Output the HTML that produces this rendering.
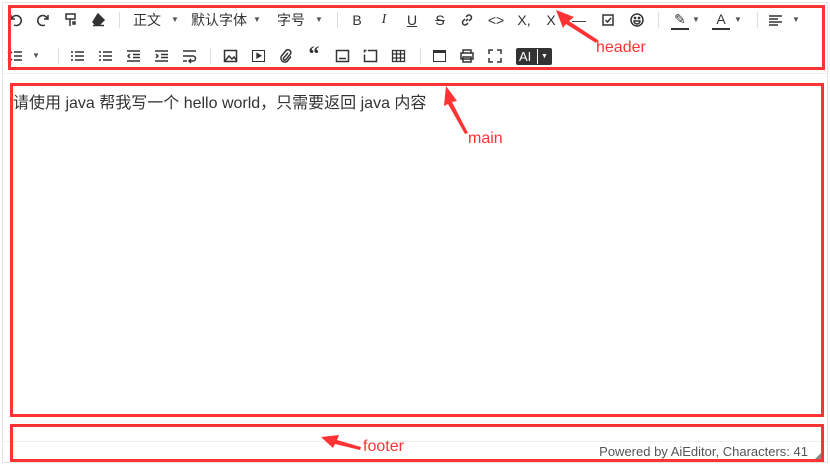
<!DOCTYPE html>
<html><head><meta charset="utf-8"><style>
*{margin:0;padding:0;box-sizing:border-box}
body{width:830px;height:465px;background:#fff;position:relative;overflow:hidden;font-family:"Liberation Sans","Noto Sans CJK SC",sans-serif;color:#333}
.a{position:absolute}
.ic{position:absolute;font-size:14px;color:#333;transform:translateX(-50%);line-height:16px;white-space:nowrap}
.dd{position:absolute;font-size:8px;color:#555;transform:translateX(-50%)}
.sep{position:absolute;width:1px;height:16px;background:#ddd}
.red{position:absolute;border:3px solid #f33}
.lbl{position:absolute;color:#f33;font-size:16px}
svg.s{position:absolute;overflow:visible}
svg.s *{fill:none;stroke:#333;stroke-width:1.5}
</style></head><body>
<div class="a" style="left:2px;top:2px;width:826px;height:461px;border:1px solid #e5e5e5"></div>
<div class="a" style="left:3px;top:73px;width:824px;height:1px;background:#eee"></div>
<div class="a" style="left:3px;top:441px;width:824px;height:1px;background:#eee"></div>

<!-- row1 -->
<svg class="s" style="left:10px;top:14px" width="12" height="12"><path d="M1 1v4h4M1.5 5A5 5 0 1 1 4 11"/></svg>
<svg class="s" style="left:37px;top:14px" width="12" height="12"><path d="M11 1v4h-4M10.5 5A5 5 0 1 0 8 11"/></svg>
<svg class="s" style="left:65px;top:13px" width="12" height="14"><path d="M1 1h9v5h-9zM5 6v7M8 9h2v2h-2z"/></svg>
<svg class="s" style="left:92px;top:13px" width="13" height="13"><path d="M6 1l6 6-5 5h-3l-3-3z" style="fill:#333"/><path d="M1 12.5h11"/></svg>
<div class="sep" style="left:119px;top:12px"></div>
<span class="ic" style="left:147px;top:12px">正文</span><span class="dd" style="left:175px;top:15px">▼</span>
<span class="ic" style="left:219px;top:12px">默认字体</span><span class="dd" style="left:257px;top:15px">▼</span>
<span class="ic" style="left:291px;top:12px">字号</span><span class="dd" style="left:319px;top:15px">▼</span>
<div class="sep" style="left:337px;top:12px"></div>
<span class="ic" style="left:357px;top:12px">B</span>
<span class="ic" style="left:384px;top:12px;font-style:italic;font-family:'Liberation Serif'">I</span>
<span class="ic" style="left:412px;top:12px;text-decoration:underline">U</span>
<span class="ic" style="left:440px;top:12px;text-decoration:line-through">S</span>
<svg class="s" style="left:461px;top:14px" width="12" height="12"><path d="M5 7l2-2M4 5L2 7a2.5 2.5 0 0 0 3.5 3.5L7 9M8 7l2-2A2.5 2.5 0 0 0 6.5 1.5L5 3"/></svg>
<span class="ic" style="left:496px;top:12px">&lt;&gt;</span>
<span class="ic" style="left:524px;top:12px">X,</span>
<span class="ic" style="left:551px;top:12px">X</span>
<span class="ic" style="left:579px;top:12px">—</span>
<svg class="s" style="left:602px;top:14px" width="12" height="12"><path d="M1 1h10v10h-10zM3.5 6l2 2 3.5-4"/></svg>
<svg class="s" style="left:630px;top:13px" width="14" height="14"><circle cx="7" cy="7" r="6"/><path d="M4 8a3 3 0 0 0 6 0z"/><circle cx="5" cy="5" r=".6"/><circle cx="9" cy="5" r=".6"/></svg>
<div class="sep" style="left:658px;top:12px"></div>
<span class="ic" style="left:680px;top:11px">✎</span><div class="a" style="left:671px;top:28px;width:18px;height:2px;background:#333"></div><span class="dd" style="left:696px;top:15px">▼</span>
<span class="ic" style="left:721px;top:11px">A</span><div class="a" style="left:712px;top:28px;width:18px;height:2px;background:#333"></div><span class="dd" style="left:738px;top:15px">▼</span>
<div class="sep" style="left:757px;top:12px"></div>
<svg class="s" style="left:769px;top:15px" width="13" height="11"><path d="M0 1h13M0 4h9M0 7h13M0 10h9"/></svg><span class="dd" style="left:796px;top:15px">▼</span>

<!-- row2 -->
<svg class="s" style="left:8px;top:50px" width="14" height="12"><path d="M2 1v10M0 3l2-2 2 2M0 9l2 2 2-2M6 2h8M6 6h8M6 10h8"/></svg><span class="dd" style="left:36px;top:51px">▼</span>
<div class="sep" style="left:58px;top:48px"></div>
<svg class="s" style="left:71px;top:50px" width="13" height="12"><path d="M4 2h9M4 6h9M4 10h9M0 2h2M0 6h2M0 10h2"/></svg>
<svg class="s" style="left:99px;top:50px" width="13" height="12"><path d="M4 2h9M4 6h9M4 10h9M0 2h2M0 6h2M0 10h2"/></svg>
<svg class="s" style="left:127px;top:50px" width="13" height="12"><path d="M0 1h13M6 4.5h7M6 7.5h7M0 11h13M3 4L1 6l2 2"/></svg>
<svg class="s" style="left:155px;top:50px" width="13" height="12"><path d="M0 1h13M6 4.5h7M6 7.5h7M0 11h13M1 4l2 2-2 2"/></svg>
<svg class="s" style="left:183px;top:50px" width="13" height="12"><path d="M0 1h13M0 6h10a2.5 2.5 0 0 1 0 5h-3M0 11h4M8 9l-2 2 2 2"/></svg>
<div class="sep" style="left:210px;top:48px"></div>
<svg class="s" style="left:224px;top:50px" width="13" height="12"><path d="M.5.5h12v11h-12zM1 11l4-5 3 3 2-2 3 4"/></svg>
<div class="a" style="left:252px;top:50px;width:13px;height:12px;border:1.5px solid #333"></div><span class="ic" style="left:259px;top:49px;font-size:7px">▶</span>
<svg class="s" style="left:280px;top:49px" width="12" height="14"><path d="M8 4l-4.5 5a1.5 1.5 0 0 0 2 2l5-6a3 3 0 0 0-4-4l-5 6a4 4 0 0 0 5.5 5.5l4-5"/></svg>
<span class="ic" style="left:314px;top:46px;font-size:22px;font-weight:bold;font-family:'Liberation Serif'">“</span>
<svg class="s" style="left:336px;top:50px" width="13" height="12"><path d="M.5.5h12v11h-12zM3 8.5h7"/></svg>
<svg class="s" style="left:364px;top:50px" width="13" height="12"><path d="M4 .5h8.5v11h-12v-7M.5 2.5v-2h2"/></svg>
<svg class="s" style="left:392px;top:50px" width="13" height="12"><path d="M.5.5h12v11h-12zM.5 4h12M.5 8h12M4.5.5v11M8.5.5v11" style="stroke-width:1.3"/></svg>
<div class="sep" style="left:420px;top:48px"></div>
<div class="a" style="left:433px;top:50px;width:13px;height:12px;border:1.5px solid #333;border-top-width:3px"></div>
<svg class="s" style="left:460px;top:49px" width="14" height="14"><path d="M3 4V1h8v3M1 4h12v6H1zM3 8h8v5H3z"/></svg>
<svg class="s" style="left:489px;top:50px" width="12" height="12"><path d="M0 4V0h4M8 0h4v4M12 8v4H8M4 12H0V8"/></svg>
<div class="a" style="left:516px;top:48px;width:36px;height:17px;background:#333;border-radius:2px;color:#fff;font-size:13px;line-height:17px;padding-left:3px">AI<span style="position:absolute;left:21px;top:1px;width:1px;height:15px;background:#fff"></span><span style="position:absolute;left:25px;top:0;font-size:7px">▼</span></div>

<div class="a" style="left:13px;top:89px;font-size:16px;color:#333">请使用 java 帮我写一个 hello world，只需要返回 java 内容</div>
<div class="a" style="right:22px;top:444px;font-size:13px;color:#555">Powered by AiEditor, Characters: 41</div>
<div class="a" style="left:815px;top:453px;width:0;height:0;border-left:6px solid transparent;border-bottom:6px solid #888"></div>

<div class="red" style="left:8px;top:5px;width:817px;height:65px"></div>
<div class="red" style="left:10px;top:83px;width:814px;height:334px"></div>
<div class="red" style="left:10px;top:424px;width:814px;height:38px"></div>

<svg class="a" style="left:0;top:0" width="830" height="465">
<g fill="#f33">
<polygon points="556,10 574,17 569,21 598,40 596,43 566,24 563,28"/>
<polygon points="446,86 457,101 452,102 468,133 465,134 448,104 444,106"/>
<polygon points="321,437 339,435 337,440 361,447 360,450 335,444 333,448"/>
</g></svg>
<div class="lbl" style="left:596px;top:39px">header</div>
<div class="lbl" style="left:468px;top:130px">main</div>
<div class="lbl" style="left:363px;top:438px">footer</div>
</body></html>
